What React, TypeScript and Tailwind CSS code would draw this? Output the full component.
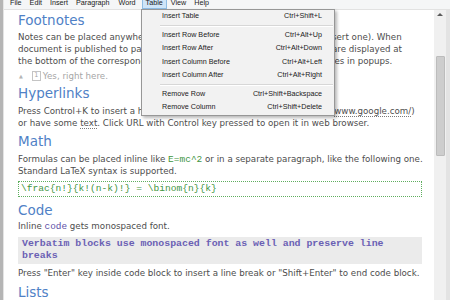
import React from 'react';

const menuBar = ['File', 'Edit', 'Insert', 'Paragraph', 'Word', 'Table', 'View', 'Help'];

type Item = { label: string; keys: string } | 'sep';

const tableMenu: Item[] = [
  { label: 'Insert Table', keys: 'Ctrl+Shift+L' },
  'sep',
  { label: 'Insert Row Before', keys: 'Ctrl+Alt+Up' },
  { label: 'Insert Row After', keys: 'Ctrl+Alt+Down' },
  { label: 'Insert Column Before', keys: 'Ctrl+Alt+Left' },
  { label: 'Insert Column After', keys: 'Ctrl+Alt+Right' },
  'sep',
  { label: 'Remove Row', keys: 'Ctrl+Shift+Backspace' },
  { label: 'Remove Column', keys: 'Ctrl+Shift+Delete' },
];

function Heading({ children, className = '' }: { children: React.ReactNode; className?: string }) {
  return (
    <h2 className={`h-[16px] whitespace-nowrap text-[13.5px] leading-[16px] text-[#4f81c6] ${className}`}>
      {children}
    </h2>
  );
}

function Line({ children }: { children: React.ReactNode }) {
  return <div className="h-[12px] whitespace-nowrap leading-[12px]">{children}</div>;
}

// the start of a line that runs on under the open menu
function Under({ w, children }: { w: string; children: React.ReactNode }) {
  return <span className={`inline-block overflow-hidden whitespace-nowrap align-top ${w}`}>{children}</span>;
}

function TableMenu() {
  return (
    <div className="absolute left-[141px] top-[9px] w-[194px] border border-[#979797] bg-[#f2f2f2] font-['Liberation_Sans',Arial,sans-serif] text-[7.2px] text-[#1a1a1a] shadow-[2px_2px_3px_rgba(0,0,0,0.28)]">
      {tableMenu.map((it, i) =>
        it === 'sep' ? (
          <div key={i} className="flex h-[5px] flex-col justify-center pl-[18px] pr-[1px]">
            <div className="h-[1px] w-full bg-[#d7d7d7]" />
            <div className="h-[1px] w-full bg-white" />
          </div>
        ) : (
          <div key={i} className="flex h-[13.5px] items-center justify-between pl-[20px] pr-[12px]">
            <span>{it.label}</span>
            <span>{it.keys}</span>
          </div>
        ),
      )}
    </div>
  );
}

export default function App() {
  return (
    <div className="relative flex h-[300px] w-[450px] overflow-hidden bg-white font-['DejaVu_Sans',Verdana,sans-serif] text-[8.7px] text-[#4d4d4d]">
      {/* window frame, left */}
      <div className="flex w-[4px] shrink-0">
        <div className="w-[3px] bg-[#b5b5b5]" />
        <div className="w-[1px] bg-[#e4e4e4]" />
      </div>

      <div className="flex min-w-0 flex-1 flex-col">
        {/* menu bar, cut at the top */}
        <div className="flex h-[10px] shrink-0 items-start overflow-hidden border-b border-[#e2e2e2] bg-[#f5f6f7] pl-[2px] font-['Liberation_Sans',Arial,sans-serif] text-[7.2px] text-[#1a1a1a]">
          {menuBar.map((m) => (
            <span
              key={m}
              className={
                m === 'Table'
                  ? 'ml-[2px] -mt-[1px] h-[10px] border border-[#8fbde4] bg-[#cfe5f8] px-[3px] leading-[6px]'
                  : m === 'Word'
                    ? 'ml-[1px] -mt-[2px] px-[4px] leading-[10px]'
                    : '-mt-[2px] px-[4px] leading-[10px]'
              }
            >
              {m}
            </span>
          ))}
        </div>

        <div className="flex min-h-0 flex-1">
          {/* document */}
          <div className="min-w-0 flex-1 overflow-hidden pl-[14px] pr-[12px] pt-[2px]">
            <Heading>Footnotes</Heading>
            <div className="mt-[2.5px]">
              <Line>
                <Under w="w-[314px]">Notes can be placed anywhere in the text using Ctrl+Shift+N (in</Under>
                sert one). When
              </Line>
              <Line>
                <Under w="w-[314px]">document is published to page, footnote texts and their numbers </Under>
                are displayed at
              </Line>
              <Line>
                <Under w="w-[313px]">the bottom of the corresponding section, and shown as no</Under>
                tes in popups.
              </Line>
            </div>
            <div className="mt-[3px] flex h-[12px] items-center text-[#a6a6a6]">
              <span className="ml-[1px] text-[5px] leading-[12px] text-[#b5b5b5]">▲</span>
              <span className="ml-[9px] flex h-[10px] w-[9px] items-center justify-center border border-[#c4c4c4] text-[6.5px] leading-none">
                1
              </span>
              <span className="ml-[2px] leading-[12px]">Yes, right here.</span>
            </div>

            <Heading className="mt-[3px]">Hyperlinks</Heading>
            <div className="mt-[4.5px]">
              <Line>
                Press Control+K to insert a hyperlink. A link can be plain URL (like http://
                <span className="border-b border-dotted border-[#7a7a7a]">www.google.com/</span>)
              </Line>
              <Line>
                or have some <span className="border-b border-dotted border-[#7a7a7a]">text</span>. Click URL with
                Control key pressed to open it in web browser.
              </Line>
            </div>

            <Heading className="mt-[3.5px]">Math</Heading>
            <div className="mt-[4.5px]">
              <Line>
                Formulas can be placed inline like{' '}
                <span className="font-['Liberation_Mono',monospace] text-[9.5px] text-[#3f963f]">E=mc^2</span> or in
                a separate paragraph, like the following one.
              </Line>
              <Line>Standard LaTeX syntax is supported.</Line>
            </div>
            <div className="mt-[3.5px] h-[16px] whitespace-nowrap border border-dotted border-[#5fae5f] pl-[2px] font-['Liberation_Mono',monospace] text-[9.6px] leading-[14px] text-[#3f963f]">
              {'\\frac{n!}{k!(n-k)!} = \\binom{n}{k}'}
            </div>

            <Heading className="mt-[5px]">Code</Heading>
            <div className="mt-[2px]">
              <Line>
                Inline <span className="font-['Liberation_Mono',monospace] text-[9.4px] text-[#5a4ea6]">code</span>{' '}
                gets monospaced font.
              </Line>
            </div>
            <div className="mt-[5px] h-[27px] bg-[#ebebeb] pl-[4px] pt-[1.5px] font-['Liberation_Mono',monospace] text-[9.9px] font-bold leading-[12px] text-[#6a60b4]">
              <div className="whitespace-nowrap">Verbatim blocks use monospaced font as well and preserve line</div>
              <div className="whitespace-nowrap">breaks</div>
            </div>
            <div className="mt-[3.5px]">
              <Line>
                Press "Enter" key inside code block to insert a line break or "Shift+Enter" to end code block.
              </Line>
            </div>

            <Heading className="mt-[4.5px]">Lists</Heading>
          </div>

          {/* scrollbar */}
          <div className="flex w-[12px] shrink-0 flex-col items-center bg-[#f0f0f0]">
            <div className="mt-[3px] h-0 w-0 border-x-[3px] border-b-[3px] border-x-transparent border-b-[#5a5a5a]" />
            <div className="mt-[40px] h-[100px] w-[9px] rounded-[1px] border border-[#bcbcbc] bg-[#cdcdcd]" />
          </div>
          <div className="w-[4px] shrink-0 bg-[#e3e3e3]" />
        </div>
      </div>

      <TableMenu />
    </div>
  );
}
